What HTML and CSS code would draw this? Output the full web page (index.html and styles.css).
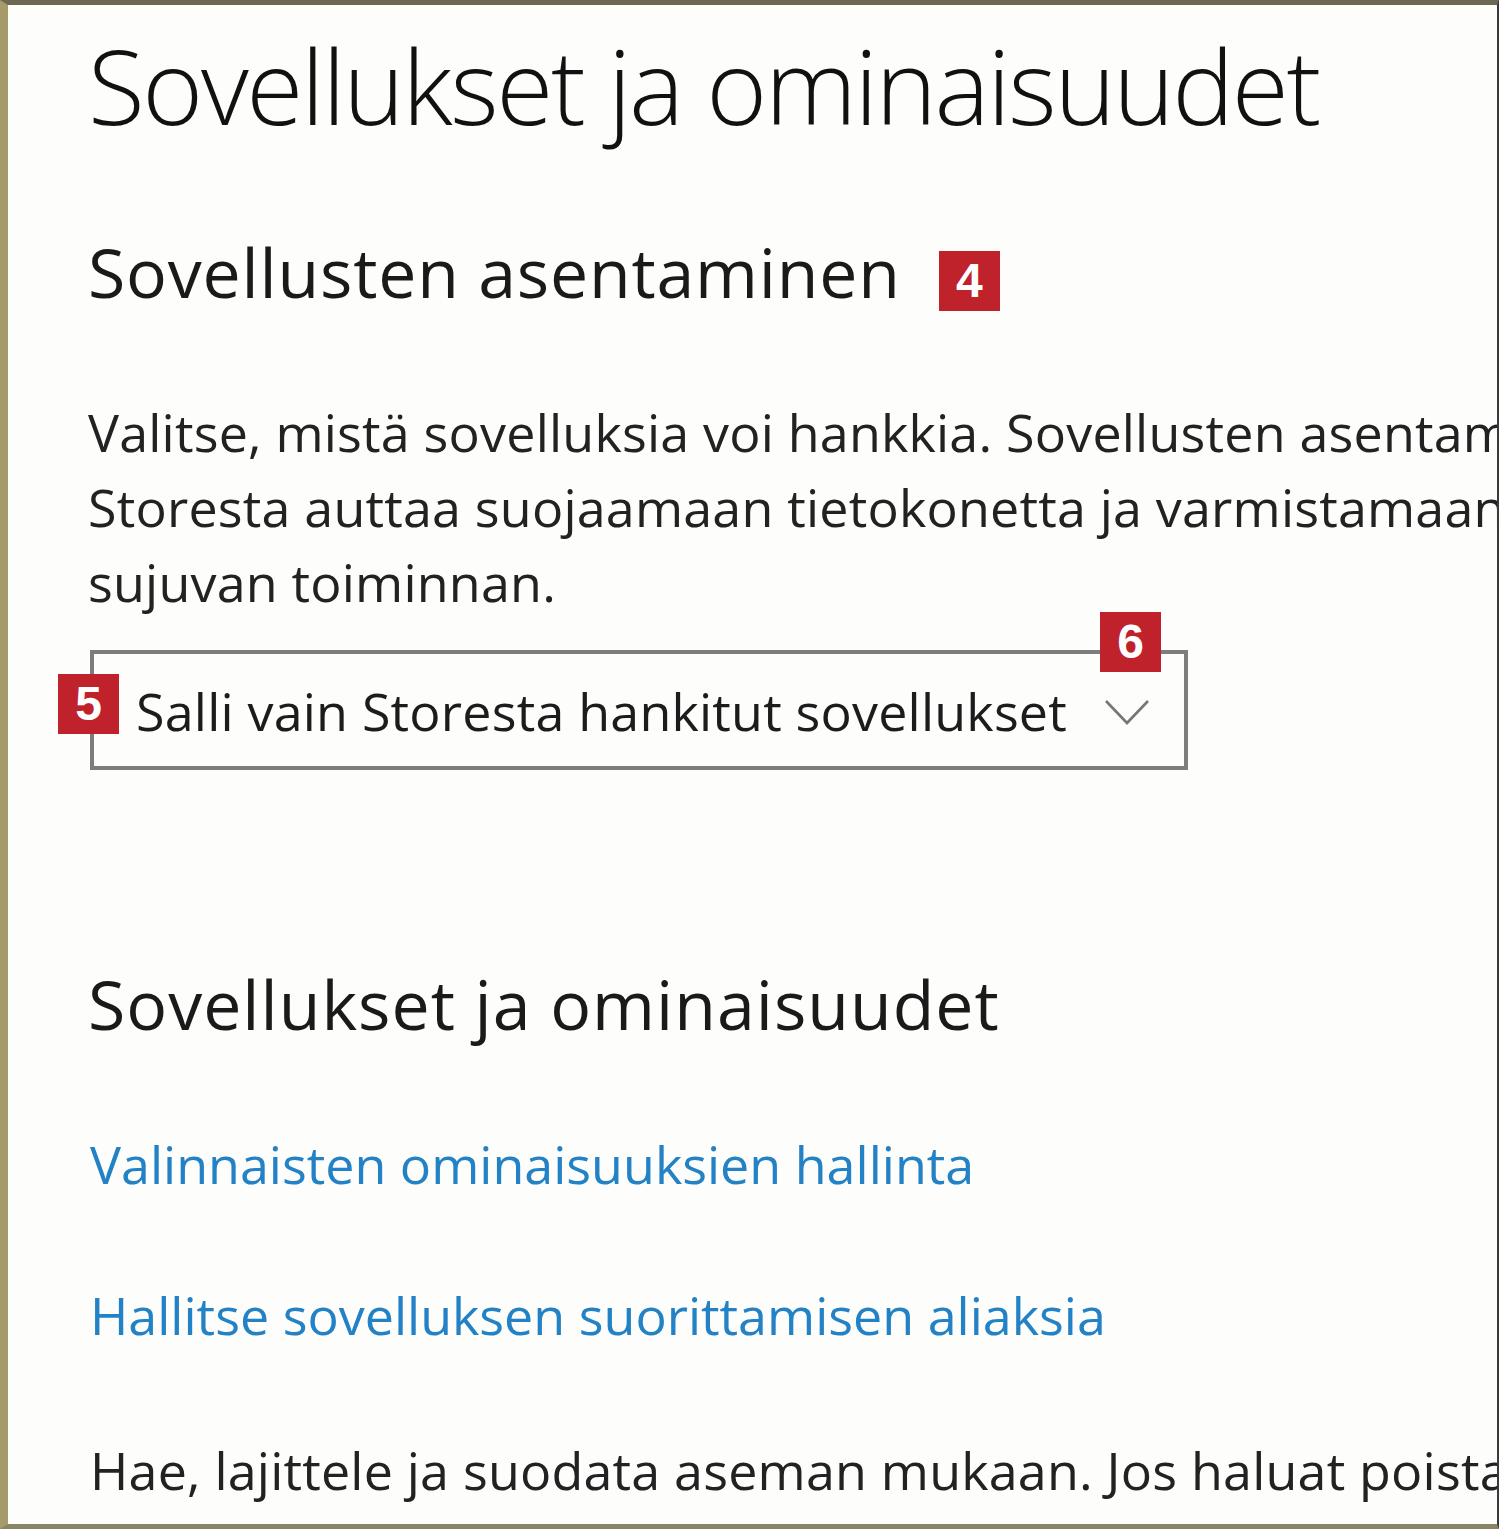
FILE: index.html
```html
<!DOCTYPE html>
<html lang="fi">
<head>
<meta charset="utf-8">
<title>Sovellukset ja ominaisuudet</title>
<link rel="stylesheet" href="styles.css">
</head>
<body>
<div class="window">
  <div class="content">
    <h1 class="title">Sovellukset ja ominaisuudet</h1>

    <h2 class="subhead">Sovellusten asentaminen <span class="badge badge-inline">4</span></h2>

    <p class="para">Valitse, mistä sovelluksia voi hankkia. Sovellusten asentaminen vain<br>Storesta auttaa suojaamaan tietokonetta ja varmistamaan laitteen<br>sujuvan toiminnan.</p>

    <div class="dropdown">
      <span class="badge badge-left">5</span>
      <span class="dropdown-text">Salli vain Storesta hankitut sovellukset</span>
      <svg class="chevron" viewBox="0 0 46 28" width="46" height="28" aria-hidden="true">
        <polyline points="2,3 23,25 44,3" fill="none" stroke="#767676" stroke-width="2.6"/>
      </svg>
      <span class="badge badge-top">6</span>
    </div>

    <h2 class="subhead subhead-2">Sovellukset ja ominaisuudet</h2>

    <a class="link link-1" href="#">Valinnaisten ominaisuuksien hallinta</a>
    <a class="link link-2" href="#">Hallitse sovelluksen suorittamisen aliaksia</a>

    <p class="para para-last">Hae, lajittele ja suodata aseman mukaan. Jos haluat poistaa tai siirtää<br>sovelluksen, valitse se luettelosta.</p>
  </div>
</div>
</body>
</html>
```
FILE: styles.css
```css
html, body {
  margin: 0;
  padding: 0;
  background: #ffffff;
}

.window {
  box-sizing: border-box;
  width: 1499px;
  height: 1529px;
  overflow: hidden;
  background: #fdfdfb;
  border-left: 8px solid #a59a68;
  border-top: 5px solid #6d6854;
  border-right: 2px solid #3a3a3a;
  border-bottom: 5px solid #8a8466;
}

.content {
  padding-left: 80px;
  font-family: "Open Sans", "Noto Sans", sans-serif;
  color: #1c1c1c;
  white-space: nowrap;
}

.title {
  margin: 0;
  padding-top: 20px;
  font-size: 104px;
  font-weight: 300;
  line-height: 120px;
  letter-spacing: -2.4px;
  color: #111111;
}

.subhead {
  margin: 0;
  margin-top: 87px;
  font-size: 68px;
  font-weight: 400;
  line-height: 80px;
  letter-spacing: 0.8px;
  color: #1a1a1a;
  display: flex;
  align-items: center;
}

.para {
  margin: 0;
  margin-top: 82px;
  font-size: 52px;
  line-height: 75px;
  letter-spacing: 0.2px;
  color: #222222;
}

.badge {
  display: inline-flex;
  align-items: center;
  justify-content: center;
  width: 61px;
  height: 60px;
  background: #c0222c;
  color: #ffffff;
  font-family: "Liberation Sans", Arial, sans-serif;
  font-weight: 700;
  font-size: 48px;
  line-height: 1;
  letter-spacing: 0;
}

.badge-inline {
  margin-left: 38px;
  margin-top: 18px;
}

.dropdown {
  position: relative;
  box-sizing: border-box;
  width: 1098px;
  height: 120px;
  margin-top: 31px;
  margin-left: 2px;
  border: 4px solid #7d7d7d;
  display: flex;
  align-items: center;
  padding-left: 42px;
}

.dropdown-text {
  font-size: 52px;
  letter-spacing: 0.2px;
  color: #1c1c1c;
  flex: 1;
}

.chevron {
  margin-right: 34px;
  margin-top: 4px;
}

.badge-left {
  position: absolute;
  left: -36px;
  top: 20px;
}

.badge-top {
  position: absolute;
  left: 1006px;
  top: -42px;
}

.subhead-2 {
  margin-top: 194px;
  letter-spacing: 1px;
}

.link {
  display: block;
  font-size: 52px;
  line-height: 75px;
  letter-spacing: 0px;
  color: #2382c6;
  text-decoration: none;
  margin-left: 2px;
}

.link-1 {
  margin-top: 82px;
}

.link-2 {
  margin-top: 76px;
}

.para-last {
  margin-top: 80px;
  margin-left: 2px;
}
```
